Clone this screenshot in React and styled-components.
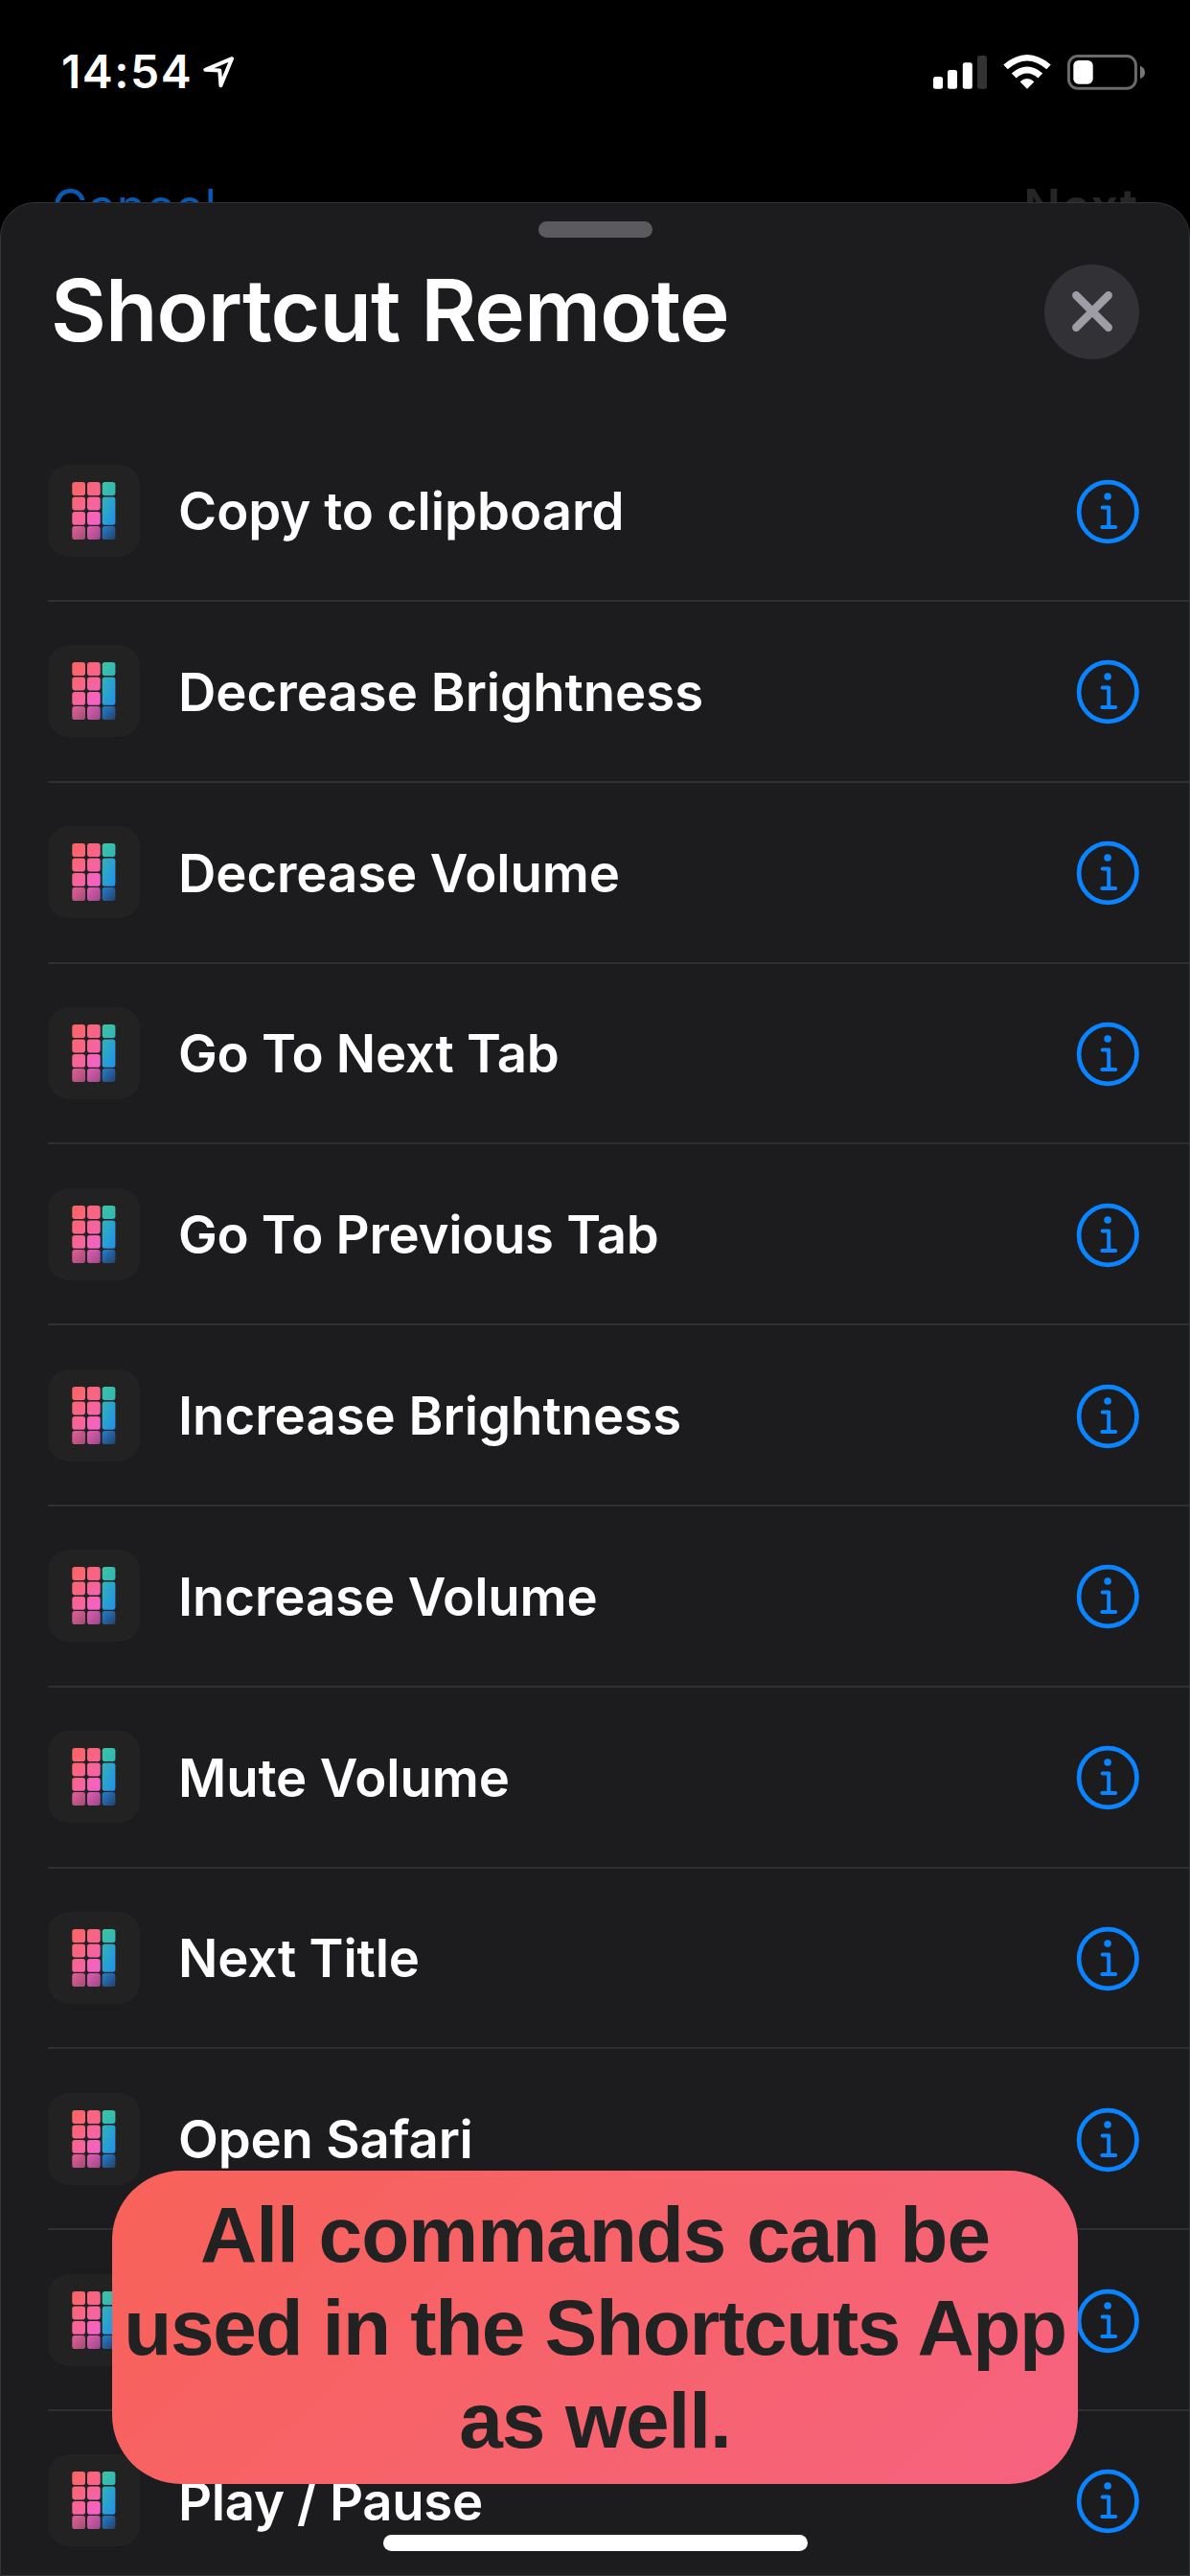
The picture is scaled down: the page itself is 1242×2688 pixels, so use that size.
import React from "react";
import styled, { createGlobalStyle } from "styled-components";

const GlobalStyle = createGlobalStyle`
  html, body { margin: 0; padding: 0; background: #000; }
  body { overflow: hidden; }
  * { box-sizing: border-box; }
`;

const Screen = styled.div`
  position: relative;
  display: flex;
  flex-direction: column;
  width: 1242px;
  height: 2688px;
  overflow: hidden;
  background: #000;
  color: #fff;
  font-family: Inter, "Liberation Sans", sans-serif;
`;

const StatusBar = styled.header`
  display: flex;
  justify-content: space-between;
  align-items: flex-start;
  height: 180px;
  padding: 46px 46px 0 64px;
  flex: none;
`;

const ClockGroup = styled.div`
  display: flex;
  align-items: flex-start;
  gap: 11px;
`;

const Clock = styled.time`
  width: 136px;
  font-size: 48px;
  line-height: 58px;
  font-weight: 600;
  letter-spacing: 1.5px;
  white-space: nowrap;
`;

const LocationArrow = styled.svg`
  width: 36px;
  height: 36px;
  margin-top: 11px;
`;

const StatusIcons = styled.svg`
  width: 224px;
  height: 40px;
  margin-top: 10px;
`;

const BackdropBar = styled.div`
  display: flex;
  justify-content: space-between;
  flex: none;
  height: 31px;
  padding: 5px 54px 0;
  overflow: hidden;
  font-size: 51px;
  line-height: 62px;
`;

const BackdropAction = styled.span`
  color: ${(p) => (p.$muted ? "#262627" : "#0659b4")};
  font-weight: ${(p) => (p.$muted ? 600 : 400)};
  letter-spacing: ${(p) => p.$tracking}px;
`;

const Sheet = styled.main`
  flex: none;
  height: 2477px;
  border: 1px solid #333436;
  border-radius: 36px 36px 0 0;
  background: #1c1c1e;
  overflow: hidden;
`;

const Grabber = styled.div`
  width: 119px;
  height: 17px;
  margin: 19px auto 0;
  border-radius: 8.5px;
  background: #5a5a5f;
`;

const SheetHeader = styled.div`
  display: flex;
  justify-content: space-between;
  align-items: center;
  height: 154px;
  padding: 0 52px 0 52px;
`;

const Title = styled.h1`
  margin: 0 0 3px;
  font-size: 89px;
  line-height: 108px;
  font-weight: 600;
  letter-spacing: -0.9px;
`;

const CloseButton = styled.button`
  display: flex;
  align-items: center;
  justify-content: center;
  width: 99px;
  height: 99px;
  padding: 0;
  border: 0;
  border-radius: 50%;
  background: #323236;
`;

const ActionList = styled.ul`
  margin: 0;
  padding: 37.2px 0 0 49px;
  list-style: none;
`;

const ActionRow = styled.li`
  display: flex;
  align-items: center;
  height: 188.8px;
  padding-right: 51px;
  border-bottom: 2px solid #303032;
`;

const AppIcon = styled.svg`
  width: 96px;
  height: 96px;
  flex: none;
`;

const ActionLabel = styled.span`
  flex: 1;
  padding: 1px 0 0 40px;
  font-size: 54.5px;
  line-height: 66px;
  font-weight: 600;
  letter-spacing: ${(p) => p.$tracking}px;
  white-space: nowrap;
`;

const InfoIcon = styled.svg`
  width: 68px;
  height: 68px;
  margin-top: 2px;
  flex: none;
`;

const Toast = styled.div`
  position: absolute;
  left: 117px;
  top: 2265px;
  width: 1008px;
  height: 327px;
  padding-top: 18px;
  border-radius: 72px;
  background: linear-gradient(135deg, #f86259 0%, #f6636c 52%, #f6627f 100%);
  color: #222;
  font-family: "Liberation Sans", Arial, sans-serif;
  font-size: 82px;
  line-height: 97px;
  font-weight: 700;
  text-align: center;
`;

const ToastLine = styled.div`
  white-space: nowrap;
  letter-spacing: ${(p) => p.$tracking}px;
`;

const HomeIndicator = styled.div`
  position: absolute;
  left: 400px;
  top: 2645px;
  width: 443px;
  height: 17px;
  border-radius: 8.5px;
  background: #fff;
`;

const actions = [
  { label: "Copy to clipboard", tracking: 0 },
  { label: "Decrease Brightness", tracking: 0 },
  { label: "Decrease Volume", tracking: -0.1 },
  { label: "Go To Next Tab", tracking: -0.25 },
  { label: "Go To Previous Tab", tracking: -0.3 },
  { label: "Increase Brightness", tracking: 0 },
  { label: "Increase Volume", tracking: -0.1 },
  { label: "Mute Volume", tracking: -0.1 },
  { label: "Next Title", tracking: -0.15 },
  { label: "Open Safari", tracking: -0.2 },
  { label: "", tracking: 0 },
  { label: "Play / Pause", tracking: -0.3 },
];

const keys = [
  { x: 25.3, y: 18, h: 14, from: "#fa6464", to: "#f9667a" },
  { x: 41, y: 18, h: 14, from: "#f96478", to: "#f8648e" },
  { x: 56.7, y: 18, h: 14, from: "#3cc3a4", to: "#32b6b8" },
  { x: 25.3, y: 33.4, h: 14, from: "#f96474", to: "#f8658e" },
  { x: 41, y: 33.4, h: 14, from: "#f8648c", to: "#f463ae" },
  { x: 56.7, y: 33.4, h: 29.3, from: "#32b3b6", to: "#218fec" },
  { x: 25.3, y: 48.9, h: 13.8, from: "#f8648a", to: "#f464a6" },
  { x: 41, y: 48.9, h: 13.8, from: "#f565ad", to: "#ef62ca" },
  { x: 25.3, y: 64.1, h: 14, from: "#e55f96", to: "#a04c78" },
  { x: 41, y: 64.1, h: 14, from: "#e45cb2", to: "#9a4a88" },
  { x: 56.7, y: 64.1, h: 14, from: "#2380cf", to: "#26406a" },
];

function RemoteIcon({ id }) {
  return (
    <AppIcon viewBox="0 0 96 96">
      <defs>
        {keys.map((k, i) => (
          <linearGradient key={i} id={`${id}-key${i}`} x1="0" y1="0" x2="1" y2="1">
            <stop offset="0" stopColor={k.from} />
            <stop offset="1" stopColor={k.to} />
          </linearGradient>
        ))}
      </defs>
      <rect width="96" height="96" rx="21.5" fill="#222223" />
      {keys.map((k, i) => (
        <rect key={i} x={k.x} y={k.y} width="13.7" height={k.h} rx="2.8" fill={`url(#${id}-key${i})`} />
      ))}
    </AppIcon>
  );
}

function Info() {
  return (
    <InfoIcon viewBox="0 0 68 68" fill="none" stroke="#0a84ff">
      <ellipse cx="34.3" cy="34" rx="30.2" ry="30.8" strokeWidth="4.7" />
      <circle cx="34.1" cy="18" r="3.8" fill="#0a84ff" stroke="none" />
      <path d="M28.7 29.4H35.2V50M28.3 50H42.2" strokeWidth="4" strokeLinecap="round" strokeLinejoin="round" />
    </InfoIcon>
  );
}

export default function App() {
  return (
    <Screen>
      <GlobalStyle />
      <StatusBar>
        <ClockGroup>
          <Clock>14:54</Clock>
          <LocationArrow viewBox="0 0 36 36" fill="none" stroke="#fff" strokeWidth="4" strokeLinejoin="round">
            <path d="M31 4.2L3.3 15.8L18.3 16.6L19.4 32.2Z" />
          </LocationArrow>
        </ClockGroup>
        <StatusIcons viewBox="0 0 224 40" fill="#fff">
          <rect x="2" y="24" width="10" height="12.8" rx="2.5" />
          <rect x="17" y="17" width="10" height="19.8" rx="2.5" />
          <rect x="32.8" y="9.3" width="10" height="27.5" rx="2.5" />
          <rect x="48" y="2" width="10" height="34.8" rx="2.5" fill="#333" />
          <path d="M75.3 11.6Q100 -9.4 124.7 11.6L120.3 16.2Q100 -1.2 79.7 16.2Z" />
          <path d="M83.8 20.4Q100 6.6 116.2 20.4L111.4 25.4Q100 15.6 88.6 25.4Z" />
          <path d="M92.6 29.2Q100 22.8 107.4 29.2L100 36.8Z" />
          <rect x="143.4" y="2.5" width="70" height="33.8" rx="9.5" fill="none" stroke="#6a6a6a" strokeWidth="3" />
          <rect x="148.3" y="7" width="20.4" height="24.7" rx="5.5" />
          <path d="M218 12.7Q223 15 223 19.5T218 26.3Z" fill="#777" />
        </StatusIcons>
      </StatusBar>

      <BackdropBar>
        <BackdropAction $tracking={0.9}>Cancel</BackdropAction>
        <BackdropAction $muted $tracking={1}>Next</BackdropAction>
      </BackdropBar>

      <Sheet>
        <Grabber />
        <SheetHeader>
          <Title>Shortcut Remote</Title>
          <CloseButton aria-label="Close">
            <svg width="50" height="50" viewBox="0 0 50 50" stroke="#9e9da6" strokeWidth="8.3" strokeLinecap="round">
              <path d="M8.2 8.2L41.8 41.8M41.8 8.2L8.2 41.8" />
            </svg>
          </CloseButton>
        </SheetHeader>
        <ActionList>
          {actions.map((action, i) => (
            <ActionRow key={i}>
              <RemoteIcon id={`row${i}`} />
              <ActionLabel $tracking={action.tracking}>{action.label}</ActionLabel>
              <Info />
            </ActionRow>
          ))}
        </ActionList>
      </Sheet>

      <Toast>
        <ToastLine $tracking={-1}>All commands can be</ToastLine>
        <ToastLine $tracking={-1.35}>used in the Shortcuts App</ToastLine>
        <ToastLine $tracking={-1}>as well.</ToastLine>
      </Toast>
      <HomeIndicator />
    </Screen>
  );
}
